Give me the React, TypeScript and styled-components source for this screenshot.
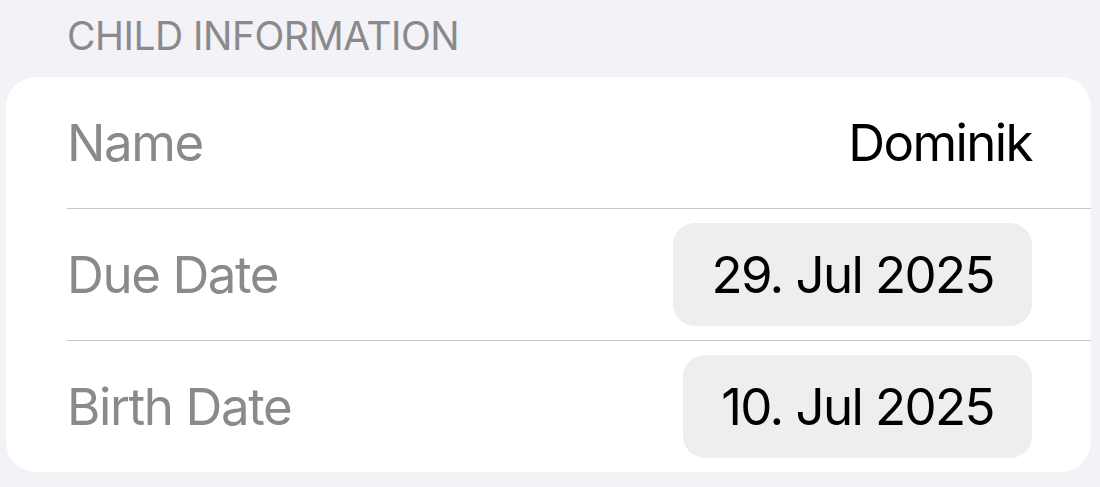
import React from "react";
import styled, {createGlobalStyle} from "styled-components";

const GlobalStyle = createGlobalStyle`
    html, body {
        margin: 0;
        padding: 0;
        background: #f2f2f7;
    }
    body {
        font-family: Inter, "Noto Sans", "Liberation Sans", sans-serif;
        -webkit-font-smoothing: antialiased;
    }
`;

type Field = {
    label: string;
    value: string;
    picker?: boolean;
};

const fields: Field[] = [
    {label: "Name", value: "Dominik"},
    {label: "Due Date", value: "29. Jul 2025", picker: true},
    {label: "Birth Date", value: "10. Jul 2025", picker: true},
];

const App: React.FC = () => {
    return <Page>
        <GlobalStyle/>
        <SectionHeader>CHILD INFORMATION</SectionHeader>
        <Card>
            {fields.map(f => <Row key={f.label}>
                <RowBody>
                    <Label>{f.label}</Label>
                    {f.picker
                        ? <DatePill>{f.value}</DatePill>
                        : <Value>{f.value}</Value>}
                </RowBody>
            </Row>)}
        </Card>
    </Page>
}

const Page = styled.div`
    height: 487px;
    padding: 16px 9px 0 6px;
    box-sizing: border-box;
    overflow: hidden;
`;

const SectionHeader = styled.div`
    padding-left: 61px;
    font-size: 39px;
    line-height: 39px;
    color: #8a8a8e;
    letter-spacing: -0.5px;
    margin-bottom: 22px;
`;

const Card = styled.div`
    background: #ffffff;
    border-radius: 30px;
    overflow: hidden;
`;

const Row = styled.div`
    padding-left: 61px;

    &:last-child > div {
        border-bottom: none;
    }
`;

const RowBody = styled.div`
    height: 131px;
    padding-right: 59px;
    border-bottom: 1px solid #c8c8cb;
    display: flex;
    align-items: center;
    justify-content: space-between;
`;

const Label = styled.div`
    font-size: 51px;
    color: #8a8a8e;
    letter-spacing: -1.4px;
`;

const Value = styled.div`
    font-size: 51px;
    color: #000000;
    letter-spacing: -1.6px;
`;

const DatePill = styled.div`
    height: 103px;
    padding: 0 38px;
    border-radius: 22px;
    background: #eeeeef;
    display: flex;
    align-items: center;
    font-size: 51px;
    color: #000000;
    letter-spacing: -1.6px;
`;

export default App;
